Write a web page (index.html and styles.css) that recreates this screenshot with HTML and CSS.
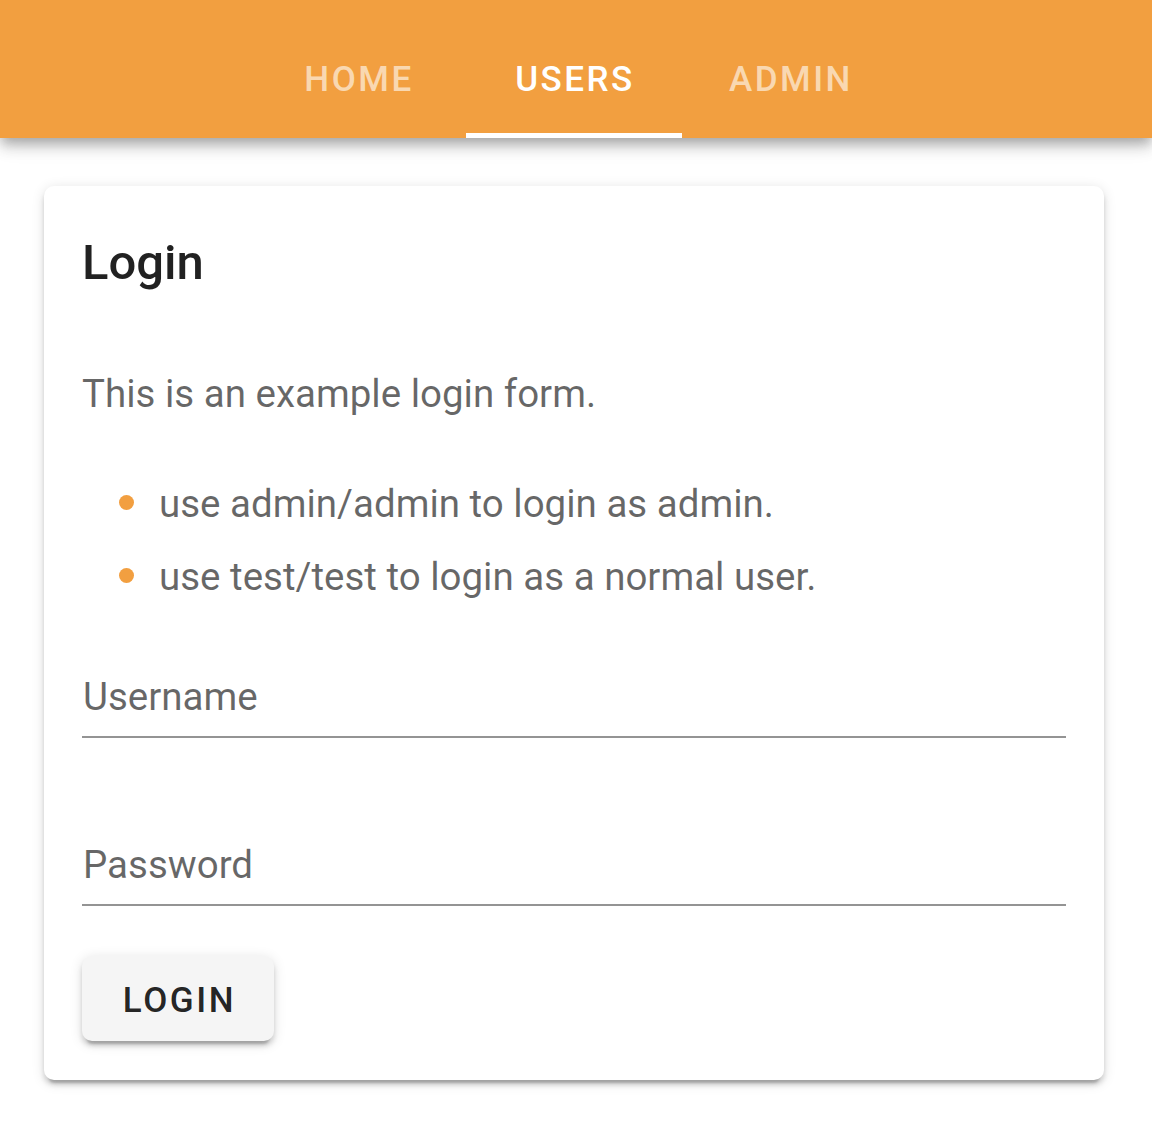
FILE: index.html
```html
<!DOCTYPE html>
<html lang="en">
<head>
<meta charset="utf-8">
<title>Login</title>
<link rel="stylesheet" href="styles.css">
</head>
<body>
<header class="appbar">
  <nav class="tabs">
    <a class="tab" href="#">HOME</a>
    <a class="tab tab-active" href="#">USERS</a>
    <a class="tab" href="#">ADMIN</a>
  </nav>
</header>
<main class="card">
  <h1 class="card-title">Login</h1>
  <p class="intro">This is an example login form.</p>
  <ul class="hints">
    <li class="hint">use admin/admin to login as admin.</li>
    <li class="hint">use test/test to login as a normal user.</li>
  </ul>
  <form class="form">
    <label class="field field-user"><span class="field-label">Username</span></label>
    <label class="field field-pass"><span class="field-label">Password</span></label>
    <div class="actions"><button type="button" class="btn">LOGIN</button></div>
  </form>
</main>
</body>
</html>
```

FILE: styles.css
```css
html, body {
  margin: 0;
  padding: 0;
  background: #ffffff;
}
body {
  font-family: Roboto, "Noto Sans", Arial, sans-serif;
  width: 1152px;
  min-height: 1148px;
}
.appbar {
  height: 138px;
  background: #f29f40;
  box-shadow: 0 5px 10px -2.5px rgba(0,0,0,.2), 0 10px 12.5px 0 rgba(0,0,0,.14), 0 2.5px 25px 0 rgba(0,0,0,.12);
  display: flex;
  justify-content: center;
  align-items: flex-end;
  position: relative;
  z-index: 1;
}
.tabs {
  display: flex;
  padding-right: 5px;
}
.tab {
  width: 216px;
  height: 120px;
  box-sizing: border-box;
  display: flex;
  align-items: center;
  justify-content: center;
  font-size: 35px;
  font-weight: 500;
  letter-spacing: 2.5px;
  color: rgba(255,255,255,.6);
  text-decoration: none;
  padding-left: 3px;
  border-bottom: 5px solid transparent;
  padding-top: 7px;
}
.tab-active {
  color: #ffffff;
  border-bottom-color: #ffffff;
}
.card {
  display: block;
  margin: 48px 48px 0 44px;
  background: #fff;
  border-radius: 10px;
  box-shadow: 0 7.5px 2.5px -5px rgba(0,0,0,.2), 0 5px 5px 0 rgba(0,0,0,.14), 0 2.5px 12.5px 0 rgba(0,0,0,.12);
  padding: 37px 38px 39px 38px;
}
.card-title {
  margin: 0;
  font-size: 49px;
  font-weight: 500;
  line-height: 80px;
  letter-spacing: 0;
  color: rgba(0,0,0,.87);
}
.intro {
  margin: 63px 0 0 0;
  font-size: 38.5px;
  line-height: 55px;
  color: rgba(0,0,0,.6);
}
.hints {
  list-style: none;
  margin: 55px 0 0 0;
  padding: 0 0 0 77px;
}
.hint {
  position: relative;
  font-size: 38.5px;
  line-height: 55px;
  color: rgba(0,0,0,.6);
  margin-bottom: 18px;
}
.hint::before {
  content: "";
  position: absolute;
  left: -40px;
  top: 19px;
  width: 15px;
  height: 15px;
  border-radius: 50%;
  background: #f29f40;
}
.form {
  margin: 65px 0 0 0;
  display: flex;
  flex-direction: column;
}
.field {
  display: block;
  border-bottom: 2px solid #949494;
  padding-bottom: 12px;
}
.field-pass {
  margin-top: 99px;
  padding-bottom: 12px;
}
.field-label {
  display: block;
  font-size: 38.5px;
  line-height: 55px;
  color: rgba(0,0,0,.6);
  padding-left: 1px;
}
.actions {
  margin-top: 50px;
  display: flex;
}
.btn {
  height: 85px;
  width: 192px;
  border: 0;
  border-radius: 10px;
  background: #f5f5f5;
  font-family: Roboto, "Noto Sans", Arial, sans-serif;
  font-size: 35px;
  font-weight: 500;
  letter-spacing: 2.6px;
  color: rgba(0,0,0,.87);
  padding: 3px 0 0 3px;
  box-shadow: 0 7.5px 2.5px -5px rgba(0,0,0,.2), 0 5px 5px 0 rgba(0,0,0,.14), 0 2.5px 12.5px 0 rgba(0,0,0,.12);
}
```
